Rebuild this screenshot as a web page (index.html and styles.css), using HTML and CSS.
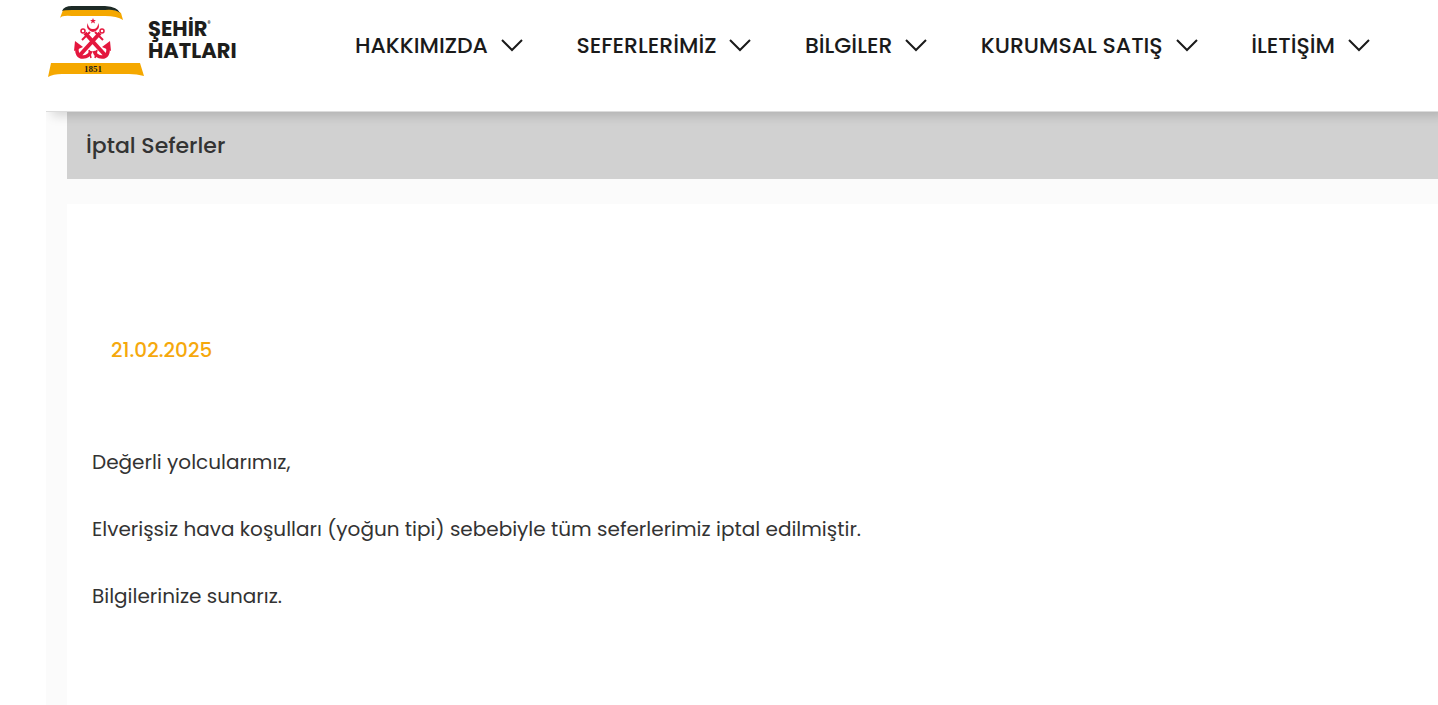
FILE: index.html
```html
<!DOCTYPE html>
<html lang="tr">
<head>
    <meta charset="utf-8" />
    <meta name="viewport" content="width=device-width, initial-scale=1.0" />
    <title>İptal Seferler - Şehir Hatları</title>
    <link rel="stylesheet" href="styles.css">
</head>
<body>
    <div class="page">
        <header class="site-header">
            <a href="#" class="logo">
                <svg width="96" height="72" viewBox="0 0 96 72" aria-hidden="true">
                    <!-- funnel -->
                    <path fill="#f5a800" d="M12 13 L15 5 Q17 3 24 4 H60 Q70 5 73 8 L75 15 Q69 11 57 11 H24 Q14 10 12 13Z"/>
                    <path fill="#1d2a26" d="M14 6 Q16 1 24 1 H57 Q70 2 72 8 Q67 4 57 5 H24 Q16 5 14 6Z"/>
                    <!-- crescent and star -->
                    <path fill="#e4173e" d="M40 18 A5.800 5.800 0 1 0 50 18 A5.100 5.100 0 1 1 40 18Z"/>
                    <path fill="#e4173e" d="M45 13l.8 2h2.200l-1.700 1.300.7 2.200-2-1.300-2 1.300.7-2.200-1.700-1.300h2.200z"/>
                    <!-- crossed anchors -->
                    <g fill="none" stroke="#e4173e">
                        <circle cx="35" cy="26" r="2" stroke-width="1.500"/>
                        <circle cx="54" cy="26" r="2" stroke-width="1.500"/>
                        <path stroke-width="4" d="M37 28 L57 50 M52 28 L32 50"/>
                        <path stroke-width="2" d="M34 35 L42 27 M55 35 L47 27"/>
                        <path stroke-width="3.500" d="M29 42 Q28 52 35 52 Q41 52 43 46 M60 42 Q61 52 54 52 Q48 52 46 46"/>
                        <path stroke-width="1.500" d="M41 45 L43 53 M49 45 L47 53"/>
                    </g>
                    <path fill="#e4173e" d="M26 46l1-10 8 6zM63 46l-1-10-8 6z"/>
                    <!-- base -->
                    <path fill="#f5a800" d="M3 58 H92 L96 71 Q89 69 81 69 H14 Q5 69 0 72Z"/>
                    <text class="logo-year" x="45" y="67" text-anchor="middle">1851</text>
                </svg>
                <span class="logo-name">
                    <span>ŞEHİR<sup>®</sup></span>
                    <span>HATLARI</span>
                </span>
            </a>
            <nav class="main-nav">
                <button type="button" class="nav-item">HAKKIMIZDA
                    <svg class="chevron" viewBox="0 0 22 14"><path d="M1 1 L11 11 L21 1"/></svg>
                </button>
                <button type="button" class="nav-item">SEFERLERİMİZ
                    <svg class="chevron" viewBox="0 0 22 14"><path d="M1 1 L11 11 L21 1"/></svg>
                </button>
                <button type="button" class="nav-item">BİLGİLER
                    <svg class="chevron" viewBox="0 0 22 14"><path d="M1 1 L11 11 L21 1"/></svg>
                </button>
                <button type="button" class="nav-item">KURUMSAL SATIŞ
                    <svg class="chevron" viewBox="0 0 22 14"><path d="M1 1 L11 11 L21 1"/></svg>
                </button>
                <button type="button" class="nav-item">İLETİŞİM
                    <svg class="chevron" viewBox="0 0 22 14"><path d="M1 1 L11 11 L21 1"/></svg>
                </button>
            </nav>
        </header>

        <main class="content">
            <h1 class="page-title">İptal Seferler</h1>
            <article class="announcement">
                <time class="date" datetime="2025-02-21">21.02.2025</time>
                <p>Değerli yolcularımız,</p>
                <p>Elverişsiz hava koşulları (yoğun tipi) sebebiyle tüm seferlerimiz iptal edilmiştir.</p>
                <p>Bilgilerinize sunarız.</p>
            </article>
        </main>
    </div>
</body>
</html>
```
FILE: styles.css
```css
:root {
    --font-family: 'Poppins', 'Inter', sans-serif;
    --font-color: #333333;
    --nav-color: #1a1a1a;
    --accent-color: #f5a80c;
    --page-background: #fbfbfb;
    --title-background: #d1d1d1;
}

* {
    box-sizing: border-box;
}

body {
    margin: 0;
    font-family: var(--font-family);
    color: var(--font-color);
    background-color: #fff;
}

.page {
    display: flex;
    flex-direction: column;
    min-height: 100vh;
    margin-left: 46px;
    overflow: hidden;
    background-color: var(--page-background);
}

.site-header {
    position: relative; /* keeps the shadow above the content */
    display: flex;
    align-items: flex-start;
    height: 112px;
    padding: 5px 68px 0 2px;
    background-color: #fff;
    border-bottom: 1px solid #dcdcdc;
    box-shadow: 6px 4px 10px 0 rgba(0, 0, 0, 0.15);
}

.logo {
    display: flex;
    gap: 4px;
    color: #1d1d1b;
    text-decoration: none;
}

.logo-year {
    font-family: 'Liberation Serif', serif;
    font-size: 9px;
    font-weight: bold;
    fill: #1d1d1b;
}

.logo-name {
    display: flex;
    flex-direction: column;
    width: 88px;
    padding-top: 13px;
    font-size: 21px;
    font-weight: 700;
    line-height: 22px;
}

.logo-name sup {
    font-size: 6px;
    line-height: 1px;
    vertical-align: 10px;
}

.main-nav {
    flex: 1;
    display: flex;
    justify-content: space-between;
    margin-left: 119px;
    padding-top: 25px;
}

.nav-item {
    display: flex;
    align-items: center;
    gap: 13px;
    padding: 0;
    border: none;
    background: none;
    color: var(--nav-color);
    font-family: inherit;
    font-size: 22px;
    font-weight: 500;
    line-height: 32px;
    white-space: nowrap;
    cursor: pointer;
}

.chevron {
    width: 22px;
    height: 14px;
    fill: none;
    stroke: var(--nav-color);
    stroke-width: 2;
}

.content {
    flex: 1;
    display: flex;
    flex-direction: column;
    gap: 25px;
    padding-left: 21px;
}

.page-title {
    margin: 0;
    padding: 18px 19px 17px;
    background-color: var(--title-background);
    font-size: 22px;
    font-weight: 500;
    line-height: 32px;
}

.announcement {
    flex: 1;
    padding: 130px 25px 64px;
    background-color: #fff;
    font-size: 20px;
    line-height: 32px;
}

.date {
    display: block;
    margin: 0 19px 80px;
    color: var(--accent-color);
    font-weight: 500;
}

.announcement p {
    margin: 0 0 35px;
}
```
